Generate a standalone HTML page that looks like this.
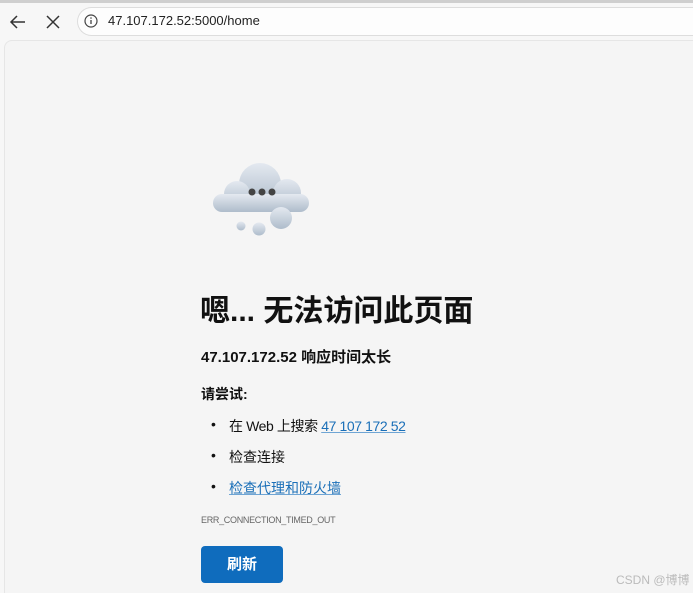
<!DOCTYPE html>
<html><head><meta charset="utf-8"><style>
*{margin:0;padding:0;box-sizing:border-box}
html,body{width:693px;height:593px;overflow:hidden}
body{background:#f7f7f7;font-family:"Liberation Sans","Noto Sans CJK SC",sans-serif;position:relative}
.topline{position:absolute;left:0;top:0;width:693px;height:3px;background:#cfcfcf}
.addr{position:absolute;left:77px;top:7px;width:616px;height:29px;background:#fdfdfd;border:1px solid #ddd;border-right:none;border-radius:15px 0 0 15px}
.url{position:absolute;left:108px;top:13px;font-size:13px;color:#222}
.panel{position:absolute;left:4px;top:40px;width:689px;height:553px;background:#f5f5f5;border:1px solid #e6e6e6;border-right:none;border-bottom:none;border-radius:8px 0 0 0}
.a{position:absolute;color:#111;white-space:nowrap}
.link{color:#1a6fb8;text-decoration:underline;text-decoration-color:#6fa5d4}
.btn{position:absolute;left:201px;top:546px;width:82px;height:37px;background:#0f6cbd;border-radius:4px;color:#fff;font-weight:bold;font-size:15px;text-align:center;line-height:37px}
</style></head><body>
<div class="topline"></div>
<svg style="position:absolute;left:8px;top:12px" width="20" height="20" viewBox="0 0 20 20"><path d="M17 10H3M9 4L3 10l6 6" stroke="#333" stroke-width="1.5" fill="none"/></svg>
<svg style="position:absolute;left:44px;top:13px" width="18" height="18" viewBox="0 0 18 18"><path d="M3 3l12 12M15 3L3 15" stroke="#333" stroke-width="1.5"/></svg>
<div class="addr"></div>
<svg style="position:absolute;left:84px;top:14px" width="14" height="14" viewBox="0 0 14 14"><circle cx="7" cy="7" r="6" stroke="#444" stroke-width="1.2" fill="none"/><path d="M7 6v4" stroke="#444" stroke-width="1.3"/><circle cx="7" cy="4" r=".8" fill="#444"/></svg>
<div class="url">47.107.172.52:5000/home</div>
<div class="panel"></div>
<svg style="position:absolute;left:210px;top:160px" width="102" height="80" viewBox="0 0 102 80">
<defs><linearGradient id="g" x1="0" y1="0" x2="0" y2="1"><stop offset="0" stop-color="#e4e9f0"/><stop offset="1" stop-color="#aebccb"/></linearGradient></defs>
<circle cx="50" cy="24" r="21" fill="url(#g)"/>
<circle cx="27" cy="34" r="13" fill="url(#g)"/>
<circle cx="77" cy="33" r="14" fill="url(#g)"/>
<rect x="3" y="34" width="96" height="18" rx="9" fill="url(#g)"/>
<circle cx="71" cy="58" r="11" fill="url(#g)"/>
<circle cx="49" cy="69" r="6.5" fill="url(#g)"/>
<circle cx="31" cy="66" r="4.5" fill="url(#g)"/>
<circle cx="42" cy="32" r="3.5" fill="#444"/><circle cx="52" cy="32" r="3.5" fill="#444"/><circle cx="62" cy="32" r="3.5" fill="#444"/>
</svg>
<div class="a" style="left:200px;top:286px;font-size:30px;font-weight:bold">嗯... 无法访问此页面</div>
<div class="a" style="left:201px;top:346px;font-size:15px;font-weight:bold">47.107.172.52 响应时间太长</div>
<div class="a" style="left:201px;top:384px;font-size:14px;font-weight:bold">请尝试:</div>
<div class="a" style="left:211px;top:416px;font-size:14px">•</div>
<div class="a" style="left:229px;top:416px;font-size:14px;letter-spacing:-0.4px">在 Web 上搜索 <span class="link">47 107 172 52</span></div>
<div class="a" style="left:211px;top:447px;font-size:14px">•</div>
<div class="a" style="left:229px;top:447px;font-size:14px">检查连接</div>
<div class="a" style="left:211px;top:478px;font-size:14px">•</div>
<div class="a" style="left:229px;top:478px;font-size:14px"><span class="link">检查代理和防火墙</span></div>
<div class="a" style="left:201px;top:515px;font-size:9px;color:#666;letter-spacing:-0.3px">ERR_CONNECTION_TIMED_OUT</div>
<div class="btn">刷新</div>
<div class="a" style="left:616px;top:571px;font-size:12px;color:#bbb">CSDN @博博</div>
</body></html>
